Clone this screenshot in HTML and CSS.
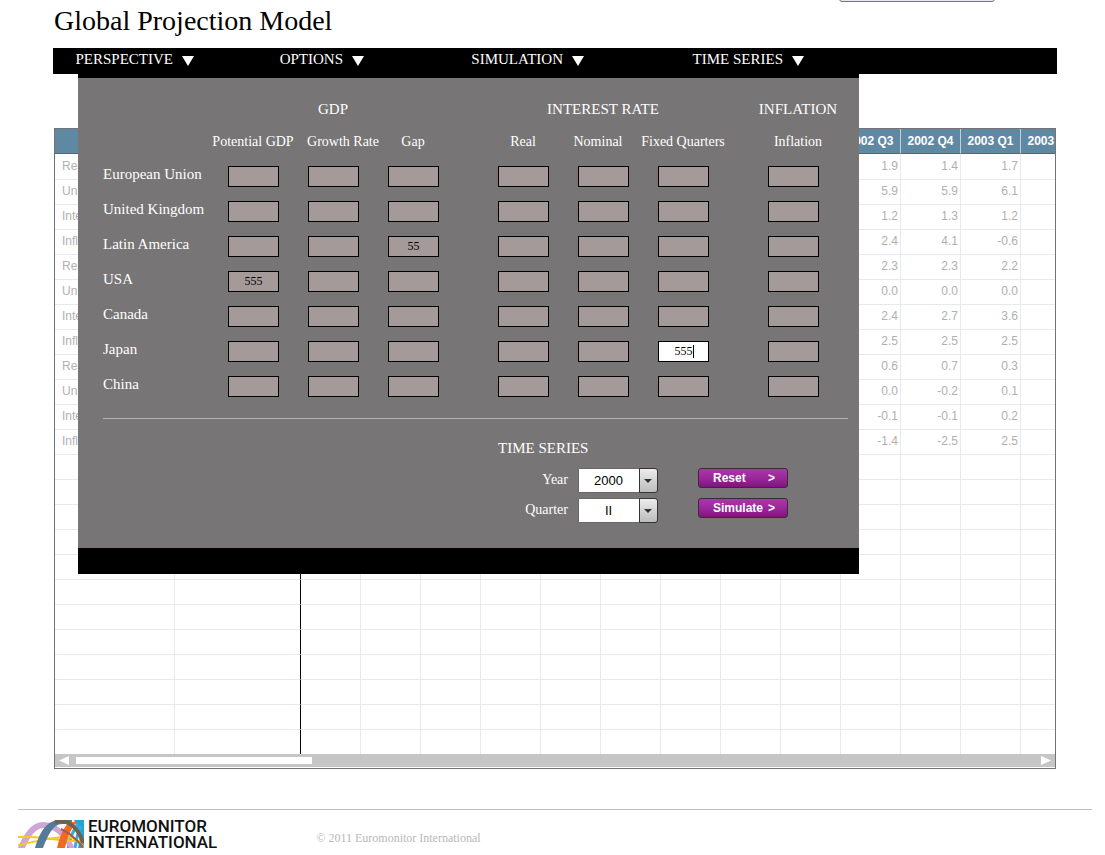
FILE: index.html
```html
<!DOCTYPE html>
<html lang="en">
<head>
<meta charset="utf-8">
<title>Global Projection Model</title>
<link rel="stylesheet" href="styles.css">
</head>
<body>
<div class="top-strip"><div class="top-tab"></div></div>
<main class="page">
  <h1 class="title">Global Projection Model</h1>

  <nav class="menu">
    <button class="menu-item menu-item-first" type="button">PERSPECTIVE <svg class="arrow" viewBox="0 0 12 10"><path d="M0 0H12L6 10Z"/></svg></button>
    <button class="menu-item menu-item-second" type="button">OPTIONS <svg class="arrow" viewBox="0 0 12 10"><path d="M0 0H12L6 10Z"/></svg></button>
    <button class="menu-item" type="button">SIMULATION <svg class="arrow" viewBox="0 0 12 10"><path d="M0 0H12L6 10Z"/></svg></button>
    <button class="menu-item" type="button">TIME SERIES <svg class="arrow" viewBox="0 0 12 10"><path d="M0 0H12L6 10Z"/></svg></button>

    <form class="panel">
      <div class="groups">
        <span class="group-gdp">GDP</span>
        <span class="group-rate">INTEREST RATE</span>
        <span class="group-inflation">INFLATION</span>
      </div>
      <div class="heads">
        <span class="head-first" id="c1">Potential GDP</span>
        <span id="c2">Growth Rate</span>
        <span id="c3">Gap</span>
        <span class="head-real" id="c4">Real</span>
        <span id="c5">Nominal</span>
        <span id="c6">Fixed Quarters</span>
        <span class="head-inflation" id="c7">Inflation</span>
      </div>
      <div class="fields" id="fields"></div>
      <hr class="divider">
      <div class="series">
        <h2 class="series-title">TIME SERIES</h2>
        <label class="series-label" for="year">Year</label>
        <span class="combo"><select class="combo-select" id="year"><option>2000</option></select></span>
        <button class="action" type="button"><span>Reset</span><span>&gt;</span></button>
        <label class="series-label" for="quarter">Quarter</label>
        <span class="combo"><select class="combo-select" id="quarter"><option>II</option></select></span>
        <button class="action" type="button"><span>Simulate</span><span>&gt;</span></button>
      </div>
    </form>
  </nav>

  <section class="grid-box">
    <div class="grid-view">
      <table class="data">
        <colgroup id="cols"><col class="col-name"><col class="col-region"></colgroup>
        <thead><tr id="head"></tr></thead>
        <tbody id="body"></tbody>
      </table>
    </div>
    <div class="scroll">
      <svg class="scroll-arrow" viewBox="0 0 10 9"><path d="M10 0V9L0 4.5Z"/></svg>
      <div class="track"><div class="thumb"></div></div>
      <svg class="scroll-arrow" viewBox="0 0 10 9"><path d="M0 0V9L10 4.5Z"/></svg>
    </div>
  </section>
</main>

<footer class="footer">
  <div class="logo">
    <svg class="logo-mark" viewBox="0 0 66 28">
      <path d="M56 0H66V28H60L62 16Z" fill="#1fa6d6"/>
      <path d="M50 29C52 18 55 10 60 4M57 29C58 20 60 12 63 6" stroke="#2fb0dc" stroke-width="3" fill="none"/>
      <path d="M0 28C6 13 14 2 25 2C39 2 49 13 57 28H51C44 16 36 8 26 8C17 8 12 17 7 28Z" fill="#cfa6d4"/>
      <path d="M0 17C22 15 38 22 66 21M0 25C18 22 30 17 50 17C58 18 62 22 66 27" stroke="#f6cc12" stroke-width="2" fill="none"/>
      <path d="M17 28C21 15 27 0 42 0H54V4H44C35 4 30 15 25 28Z" fill="#557a9a"/>
      <path d="M39 28C42 16 46 6 52 2H59C53 8 49 18 47 28Z" fill="#f26a21"/>
      <path d="M37 2C49 -1 60 6 65 23" stroke="#70604c" stroke-width="4" fill="none"/>
      <path d="M43 9C52 13 59 20 65 27" stroke="#a45a50" stroke-width="2" fill="none"/>
    </svg>
    <div class="logo-text">EUROMONITOR<br>INTERNATIONAL</div>
  </div>
  <p class="copyright">© 2011 Euromonitor International</p>
</footer>
<script src="app.js"></script>
</body>
</html>
```
FILE: styles.css
```css
*, *::before, *::after { box-sizing: border-box; }

body {
  margin: 0;
  background: #fff;
  color: #000;
  font-family: "Liberation Serif", "Times New Roman", serif;
}

button, select, input { font: inherit; margin: 0; }

.top-strip {
  display: flex;
  align-items: flex-end;
  justify-content: flex-end;
  height: 2px;
  padding-right: 110px;
  overflow: hidden;
}

.top-tab {
  flex: none;
  width: 156px;
  height: 20px;
  border: 1px solid #76767e;
  border-radius: 3px;
  background: #e6e6f2;
}

.page { padding: 0 48px 0 53px; }

.title {
  margin: 0;
  padding: 1px 0 9px 1px;
  font-size: 28px;
  font-weight: 400;
  line-height: 36px;
}

/* Menu bar and open panel */
.menu {
  position: relative;
  display: flex;
  height: 26px;
  background: #000;
}

.menu-item {
  display: flex;
  align-items: center;
  justify-content: flex-end;
  gap: 9px;
  width: 220px;
  padding: 0 0 4px;
  border: 0;
  background: none;
  color: #fff;
  font-size: 15px;
}

.menu-item-first { width: 141px; }
.menu-item-second { width: 170px; }

.arrow {
  width: 12px;
  height: 10px;
  margin-top: 3px;
  fill: #fff;
}

.panel {
  position: absolute;
  top: 26px;
  left: 25px;
  z-index: 1;
  width: 781px;
  padding: 21px 11px 25px 25px;
  border-top: 4px solid #000;
  border-bottom: 26px solid #000;
  background: #777575;
  color: #fff;
  font-size: 15px;
  line-height: 20px;
}

.groups {
  display: grid;
  grid-template-columns: 110px 240px 30px 240px 30px 90px;
  justify-items: center;
  white-space: nowrap;
}

.group-gdp { grid-column: 2; }
.group-rate { grid-column: 4; }
.group-inflation { grid-column: 6; }

.heads {
  display: grid;
  grid-template-columns: 110px 80px 100px 40px 50px 80px 70px 100px 25px 80px;
  justify-items: center;
  padding: 13px 0 14px;
  font-size: 14px;
  white-space: nowrap;
}

.head-first { grid-column: 2; }
.head-real { grid-column: 6; }
.head-inflation { grid-column: 10; }

.fields {
  display: grid;
  grid-template-columns: 110px 80px 80px 110px 80px 80px 110px 80px;
  row-gap: 14px;
}

.region { line-height: 17px; white-space: nowrap; }

.field {
  position: relative;
  height: 21px;
  padding-left: 15px;
}

.field-input {
  display: block;
  width: 51px;
  height: 21px;
  padding: 0;
  border: 1px solid #000;
  border-radius: 0;
  background: #a39a99;
  color: #000;
  font-size: 12px;
  text-align: center;
}

.field-active .field-input { background: #fff; }

/* Text cursor of the field being edited */
.field-active::after {
  content: "";
  position: absolute;
  top: 4px;
  left: 50px;
  width: 1px;
  height: 13px;
  background: #000;
}

.divider {
  height: 1px;
  margin: 21px 0 19px;
  border: 0;
  background: #b4b2b2;
}

.series {
  display: grid;
  grid-template-columns: 70px 80px 90px;
  column-gap: 10px;
  row-gap: 5px;
  padding-left: 395px;
}

.series-title {
  grid-column: 1 / -1;
  margin: 0 0 5px;
  font-size: 15px;
  font-weight: 400;
}

.series-label {
  padding-top: 2px;
  font-size: 14px;
  text-align: right;
}

.combo { position: relative; height: 25px; }

.combo-select {
  display: block;
  width: 100%;
  height: 25px;
  padding: 0 19px 0 0;
  border: 1px solid #6a6868;
  border-radius: 0 3px 3px 0;
  appearance: none;
  background: #fff;
  color: #000;
  font-family: "Liberation Sans", Arial, sans-serif;
  font-size: 13px;
  text-align-last: center;
}

.combo::before {
  content: "";
  position: absolute;
  top: 0;
  right: 0;
  width: 19px;
  height: 25px;
  border: 1px solid #333;
  border-radius: 0 3px 3px 0;
  background: linear-gradient(#ececec, #bcbcbc);
  pointer-events: none;
}

.combo::after {
  content: "";
  position: absolute;
  top: 11px;
  right: 6px;
  border: 4px solid transparent;
  border-top-color: #333;
  border-bottom: 0;
  pointer-events: none;
}

.action {
  display: flex;
  align-items: center;
  justify-content: space-between;
  width: 90px;
  height: 20px;
  margin-left: 30px;
  padding: 0 12px 1px 14px;
  border: 1px solid #3a2a3a;
  border-radius: 3px;
  background: linear-gradient(#ad36ad, #9b289b 50%, #7d157d);
  color: #fff;
  font: bold 12px "Liberation Sans", Arial, sans-serif;
}

/* Data grid */
.grid-box {
  margin: 54px 1px 0;
  padding-bottom: 1px;
  border: 1px solid #737375;
}

.grid-view {
  height: 625px;
  overflow: hidden;
}

.data {
  width: 1026px;
  border-collapse: separate;
  border-spacing: 0;
  table-layout: fixed;
  font: 12px "Liberation Sans", Arial, sans-serif;
  color: #b0b0b0;
}

.col-name { width: 120px; }
.col-region { width: 126px; }

.data th {
  height: 25px;
  padding: 0;
  border-right: 1px solid #c3ced5;
  border-bottom: 1px solid #5c6469;
  background: #5f89a3;
  color: #fff;
  font-weight: 700;
  white-space: nowrap;
}

.data td {
  height: 25px;
  padding: 0 2px 2px 0;
  border-right: 1px solid #e6eaee;
  border-bottom: 1px solid #e6eaee;
  text-align: right;
  white-space: nowrap;
  overflow: hidden;
}

.data tr:first-child td { height: 26px; }
.data td:first-child { padding-left: 7px; text-align: left; }
.data td:nth-child(2) { border-right-color: #000; }

.scroll {
  display: flex;
  align-items: center;
  gap: 7px;
  height: 13px;
  padding: 0 4px;
  background: #c6c6c6;
}

.scroll-arrow {
  flex: none;
  width: 10px;
  height: 9px;
  fill: #fff;
}

.track { flex: 1; padding-right: 16px; }

.thumb {
  width: 25%;
  height: 7px;
  background: #fff;
}

/* Footer */
.footer {
  display: flex;
  gap: 99px;
  margin: 40px 13px 0 18px;
  padding-top: 10px;
  border-top: 1px solid #bfbfbf;
}

.logo { display: flex; gap: 4px; }
.logo-mark { width: 66px; height: 28px; }

.logo-text {
  font: 500 17px/16px Roboto, sans-serif;
  color: #111;
  height: 30px;
  margin-top: -2px;
}

.copyright {
  margin: 10px 0 0;
  color: #b8b8b8;
  font-size: 12px;
  line-height: 16px;
}
```
FILE: app.js
```js
const regions = ["European Union", "United Kingdom", "Latin America", "USA", "Canada", "Japan", "China"];
const entered = { "2-3": "55", "3-1": "555", "5-6": "555" };
const active = "5-6";

document.getElementById("fields").innerHTML = regions.map((name, r) => {
  let html = `<span class="region" id="r${r}">${name}</span>`;
  for (let c = 1; c <= 7; c++) {
    const key = `${r}-${c}`;
    html += `<span class="field${key === active ? " field-active" : ""}">` +
      `<input class="field-input" type="text" aria-labelledby="r${r} c${c}" value="${entered[key] || ""}"></span>`;
  }
  return html;
}).join("");

const quarterCount = 13;
const firstShown = 9;
const quarters = ["2002 Q3", "2002 Q4", "2003 Q1", "2003 Q2"];
const names = ["Real", "Un.", "Inter.", "Infl."];
const values = [
  ["1.9", "1.4", "1.7"], ["5.9", "5.9", "6.1"], ["1.2", "1.3", "1.2"], ["2.4", "4.1", "-0.6"],
  ["2.3", "2.3", "2.2"], ["0.0", "0.0", "0.0"], ["2.4", "2.7", "3.6"], ["2.5", "2.5", "2.5"],
  ["0.6", "0.7", "0.3"], ["0.0", "-0.2", "0.1"], ["-0.1", "-0.1", "0.2"], ["-1.4", "-2.5", "2.5"]
];
const rowCount = 24;

document.getElementById("cols").insertAdjacentHTML("beforeend", "<col>".repeat(quarterCount));

let head = "<th></th><th></th>";
for (let q = 0; q < quarterCount; q++) head += `<th>${quarters[q - firstShown] || ""}</th>`;
document.getElementById("head").innerHTML = head;

let body = "";
for (let r = 0; r < rowCount; r++) {
  const row = values[r] || [];
  body += `<tr><td>${row.length ? names[r % 4] : ""}</td><td></td>`;
  for (let q = 0; q < quarterCount; q++) body += `<td>${row[q - firstShown] || ""}</td>`;
  body += "</tr>";
}
document.getElementById("body").innerHTML = body;
```
